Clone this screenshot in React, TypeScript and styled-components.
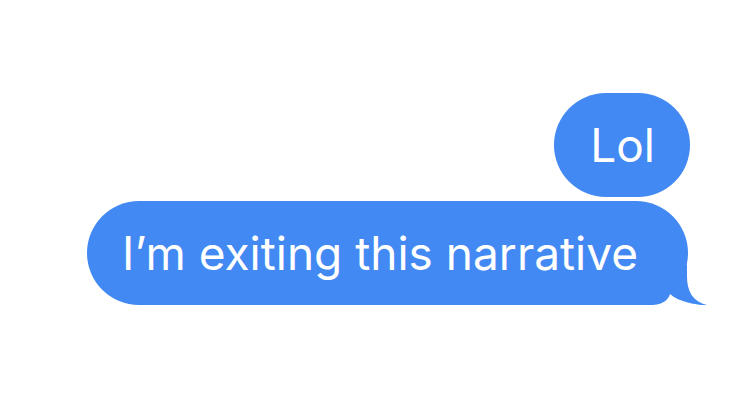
import React from "react";
import styled, { createGlobalStyle } from "styled-components";

const Global = createGlobalStyle`
  html, body { margin: 0; padding: 0; background: #ffffff; }
  body { font-family: Inter, "Noto Sans", sans-serif; }
`;

const Thread = styled.div`
  width: 738px;
  height: 406px;
  box-sizing: border-box;
  padding: 93px 48px 0 0;
  display: flex;
  flex-direction: column;
  align-items: flex-end;
  gap: 4px;
`;

const Bubble = styled.div<{ $tail?: boolean }>`
  position: relative;
  height: 104px;
  box-sizing: border-box;
  display: flex;
  align-items: center;
  background: #4289f3;
  color: #ffffff;
  font-family: Inter, "Noto Sans", sans-serif;
  font-size: 46px;
  font-weight: 400;
  white-space: nowrap;
  padding: ${(p) => (p.$tail ? "0 50px 0 35px" : "0 35px 0 36px")};
  margin-right: ${(p) => (p.$tail ? "2px" : "0")};
  border-radius: 52px;
`;

const Label = styled.span`
  position: relative;
  z-index: 1;
`;

const Tail = styled.svg`
  position: absolute;
  right: -19px;
  bottom: 0;
  width: 80px;
  height: 40px;
  overflow: visible;
  z-index: 0;
`;

export default function App() {
  return (
    <>
      <Global />
      <Thread>
        <Bubble>
          <Label>Lol</Label>
        </Bubble>
        <Bubble $tail>
          <Label>I’m exiting this narrative</Label>
          <Tail viewBox="0 0 80 40" aria-hidden>
            <path
              d="M 0 0 H 60 V 12 C 60 26, 66 37, 80 40 C 70 40.5, 52 37, 43 29 C 41.5 34, 37 39.5, 26 40 L 0 40 Z"
              fill="#4289f3"
            />
          </Tail>
        </Bubble>
      </Thread>
    </>
  );
}
